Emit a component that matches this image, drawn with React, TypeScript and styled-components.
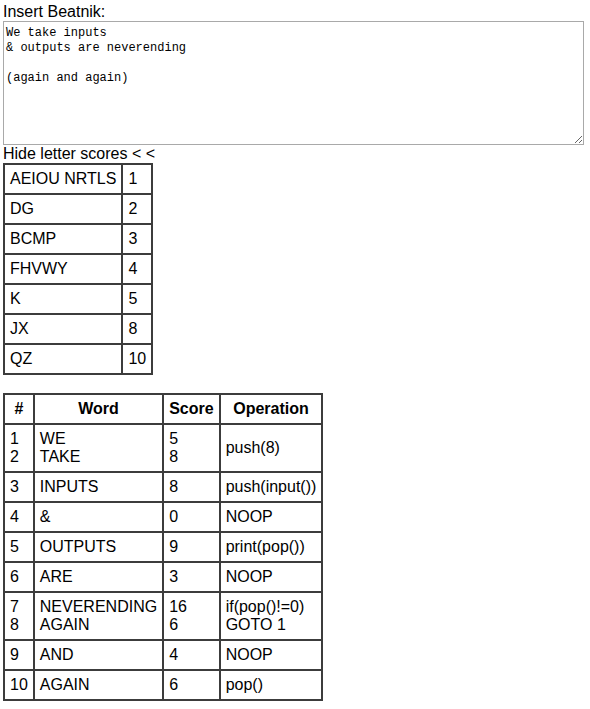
import React from "react";
import styled, { createGlobalStyle } from "styled-components";

const GlobalStyle = createGlobalStyle`
  body {
    margin: 3px;
    background: #fff;
    color: #000;
    font-family: "Liberation Sans", Arial, sans-serif;
    font-size: 16px;
    line-height: 18px;
  }
`;

const Page = styled.div`
  display: flex;
  flex-direction: column;
  align-items: flex-start;
`;

const Label = styled.label`
  display: block;
  height: 18px;
`;

const Input = styled.textarea`
  display: block;
  box-sizing: border-box;
  width: 581px;
  height: 124px;
  margin: 0;
  padding: 4px 2px 2px;
  border: 1px solid #a9a9a9;
  font-family: "Liberation Mono", "DejaVu Sans Mono", monospace;
  font-size: 12px;
  line-height: 15px;
  color: #000;
  resize: both;
  outline: none;
`;

const Toggle = styled.span`
  display: block;
  height: 18px;
  cursor: pointer;
`;

const Table = styled.table<{ $gap?: number }>`
  border-collapse: collapse;
  margin-top: ${(p) => p.$gap ?? 0}px;
  font-size: 16px;
  line-height: 18px;
`;

const Cell = styled.td`
  border: 2px solid #3c3c3c;
  padding: 5px 5px 5px 5px;
  text-align: left;
  vertical-align: middle;
  white-space: nowrap;
`;

const Head = styled.th`
  border: 2px solid #3c3c3c;
  padding: 5px;
  font-weight: bold;
  text-align: center;
  white-space: nowrap;
`;

const letters: [string, number][] = [
  ["AEIOU NRTLS", 1],
  ["DG", 2],
  ["BCMP", 3],
  ["FHVWY", 4],
  ["K", 5],
  ["JX", 8],
  ["QZ", 10],
];

type Step = { n: string[]; word: string[]; score: string[]; op: string[] };

const steps: Step[] = [
  { n: ["1", "2"], word: ["WE", "TAKE"], score: ["5", "8"], op: ["push(8)"] },
  { n: ["3"], word: ["INPUTS"], score: ["8"], op: ["push(input())"] },
  { n: ["4"], word: ["&"], score: ["0"], op: ["NOOP"] },
  { n: ["5"], word: ["OUTPUTS"], score: ["9"], op: ["print(pop())"] },
  { n: ["6"], word: ["ARE"], score: ["3"], op: ["NOOP"] },
  {
    n: ["7", "8"],
    word: ["NEVERENDING", "AGAIN"],
    score: ["16", "6"],
    op: ["if(pop()!=0)", "GOTO 1"],
  },
  { n: ["9"], word: ["AND"], score: ["4"], op: ["NOOP"] },
  { n: ["10"], word: ["AGAIN"], score: ["6"], op: ["pop()"] },
];

const Lines = ({ items }: { items: string[] }) => (
  <>
    {items.map((t, i) => (
      <React.Fragment key={i}>
        {i > 0 && <br />}
        {t}
      </React.Fragment>
    ))}
  </>
);

export default function App() {
  return (
    <Page>
      <GlobalStyle />
      <Label htmlFor="src">Insert Beatnik:</Label>
      <Input
        id="src"
        defaultValue={"We take inputs\n& outputs are neverending\n\n(again and again)"}
      />
      <Toggle>Hide letter scores &lt; &lt;</Toggle>
      <Table>
        <tbody>
          {letters.map(([l, s]) => (
            <tr key={l}>
              <Cell>{l}</Cell>
              <Cell>{s}</Cell>
            </tr>
          ))}
        </tbody>
      </Table>
      <Table $gap={18}>
        <thead>
          <tr>
            <Head>#</Head>
            <Head>Word</Head>
            <Head>Score</Head>
            <Head>Operation</Head>
          </tr>
        </thead>
        <tbody>
          {steps.map((s, i) => (
            <tr key={i}>
              <Cell>
                <Lines items={s.n} />
              </Cell>
              <Cell>
                <Lines items={s.word} />
              </Cell>
              <Cell>
                <Lines items={s.score} />
              </Cell>
              <Cell>
                <Lines items={s.op} />
              </Cell>
            </tr>
          ))}
        </tbody>
      </Table>
    </Page>
  );
}
